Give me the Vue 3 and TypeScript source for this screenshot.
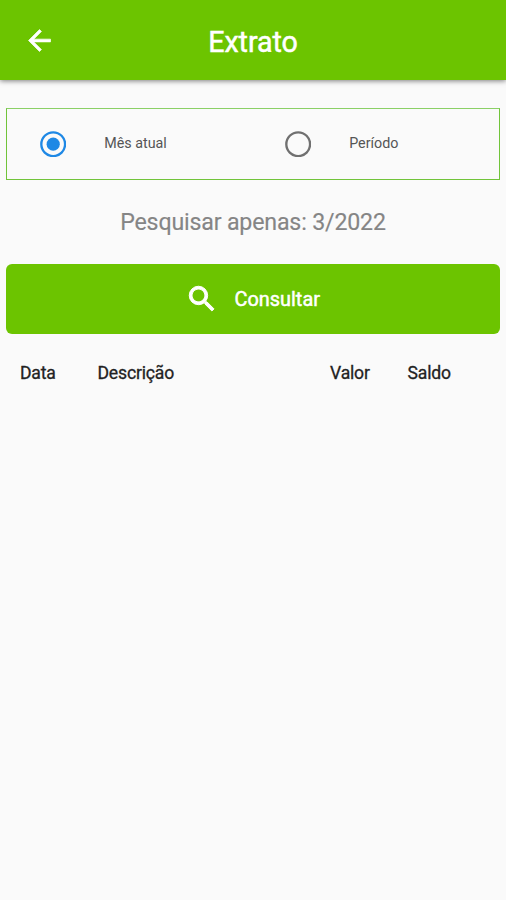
<script setup lang="ts">
import { ref } from 'vue'

const mode = ref<'month' | 'period'>('month')
const options: { id: 'month' | 'period'; label: string }[] = [
  { id: 'month', label: 'Mês atual' },
  { id: 'period', label: 'Período' },
]
const columns = ['Data', 'Descrição', 'Valor', 'Saldo']
</script>

<template>
  <div class="screen">
    <header class="bar">
      <button class="back" aria-label="Voltar">
        <svg viewBox="0 0 24 24"><path d="M20 11H7.83l5.59-5.59L12 4l-8 8 8 8 1.41-1.41L7.83 13H20v-2z" /></svg>
      </button>
      <h1>Extrato</h1>
    </header>
    <main>
      <div class="options">
        <div v-for="o in options" :key="o.id" class="option" @click="mode = o.id">
          <svg class="radio" :class="{ on: mode === o.id }" viewBox="0 0 26 26">
            <circle class="ring" cx="13" cy="13" r="11.7" />
            <circle v-if="mode === o.id" class="dot" cx="13" cy="13" r="6.5" />
          </svg>
          <span class="label">{{ o.label }}</span>
        </div>
      </div>
      <p class="hint">Pesquisar apenas: 3/2022</p>
      <button class="search">
        <svg viewBox="0 0 24 24"><path d="M15.5 14h-.79l-.28-.27A6.47 6.47 0 0 0 16 9.5 6.5 6.5 0 1 0 9.5 16c1.61 0 3.09-.59 4.23-1.57l.27.28v.79l5 4.99L20.49 19l-4.99-5zm-6 0C7.01 14 5 11.99 5 9.5S7.01 5 9.5 5 14 7.01 14 9.5 11.99 14 9.5 14z" /></svg>
        <span>Consultar</span>
      </button>
      <div class="columns">
        <span v-for="c in columns" :key="c">{{ c }}</span>
      </div>
    </main>
  </div>
</template>

<style>
body { background: #fafafa; }
</style>
<style scoped>
.screen { min-height: 900px; background: #fafafa; font-family: Roboto, sans-serif; }
.bar { display: grid; grid-template-columns: 78px 1fr 78px; align-items: center; height: 80px; background: #6cc400; color: #fff; box-shadow: 0 1px 5px rgba(0, 0, 0, .5); }
button { border: 0; padding: 0; font-family: inherit; color: #fff; background: none; }
svg { display: block; flex: none; fill: currentColor; stroke: currentColor; stroke-width: .5; }
.back { display: flex; justify-content: center; }
.back svg { width: 33px; height: 33px; }
h1 { margin: 4px 0 0; text-align: center; font-size: 28.6px; font-weight: 400; line-height: 34px; letter-spacing: -.05px; -webkit-text-stroke: .5px currentColor; }
main { padding: 28px 6px 0; }
.options { box-sizing: border-box; display: flex; height: 72px; border: 1px solid #71c43a; border-top-color: #8bd066; }
.option { display: flex; align-items: center; width: 245px; padding-left: 33px; box-sizing: border-box; }
.radio { width: 26.4px; height: 26.4px; color: #707070; }
.radio.on { color: #1e88e5; }
.ring { fill: none; stroke-width: 2.3; }
.dot { stroke: none; }
.label { margin: -2px 0 0 37.8px; font-size: 14.3px; color: #555; }
.hint { margin: 25px 0 0; text-align: center; font-size: 23.2px; line-height: 34px; letter-spacing: -.18px; color: #858585; -webkit-text-stroke: .15px currentColor; }
.search { display: flex; align-items: center; justify-content: center; width: 100%; height: 70px; margin-top: 25px; gap: 15.5px; border-radius: 6px; background: #6cc400; font-size: 19.9px; font-weight: 400; -webkit-text-stroke: .5px currentColor; }
.search svg { width: 34px; height: 34px; margin-left: -1px; stroke-width: .7; }
.columns { display: grid; grid-template-columns: 77.5px 232.5px 77.5px 1fr; padding: 28px 14px 0; font-size: 17.6px; line-height: 22px; letter-spacing: -.18px; color: #222; -webkit-text-stroke: .3px currentColor; }
</style>
